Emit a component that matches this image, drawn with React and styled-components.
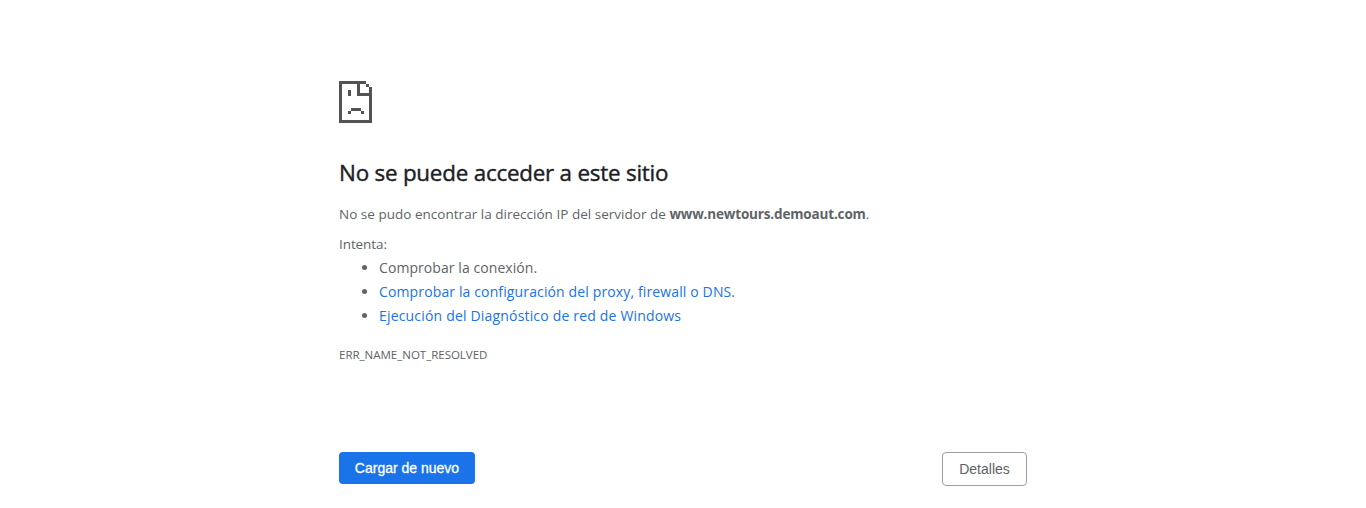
import React from 'react';
import styled, { createGlobalStyle } from 'styled-components';

const GlobalStyle = createGlobalStyle`
  body {
    margin: 0;
    background: #fff;
    color: #5f6368;
    font-family: "Segoe UI", "Open Sans", "Noto Sans", sans-serif;
    font-size: 15px;
  }
`;

const Page = styled.main`
  box-sizing: border-box;
  width: 688px;
  height: 508px;
  margin: 0 auto;
  padding-top: 81px;
  overflow: hidden;
`;

const SadPage = styled.svg`
  display: block;
  width: 33px;
  height: 42px;
  fill: #535353;
`;

const Title = styled.h1`
  margin: 34px 0 0;
  color: #202124;
  font-size: 22.4px;
  font-weight: 500;
  line-height: 32px;
  letter-spacing: -0.22px;
  -webkit-text-stroke: 0.4px #202124;
  white-space: nowrap;
`;

const Text = styled.p`
  margin: ${({ $top }) => $top}px 0 0;
  font-size: 13.5px;
  line-height: 20px;
  letter-spacing: ${({ $tracking = 0 }) => $tracking}px;
  white-space: nowrap;
`;

const Host = styled.strong`
  font-weight: 700;
  letter-spacing: -0.16px;
`;

const Suggestions = styled.ul`
  margin: 2px 0 0;
  padding: 0 0 0 40px;
  font-size: 14px;
  line-height: 24px;
`;

const Suggestion = styled.li`
  white-space: nowrap;
  letter-spacing: ${({ $tracking = 0 }) => $tracking}px;
`;

const Link = styled.a`
  color: #1a73e8;
  text-decoration: none;
`;

const ErrorCode = styled.div`
  margin-top: 17px;
  font-size: 11.5px;
  line-height: 20px;
  letter-spacing: -0.01px;
`;

const Actions = styled.div`
  display: flex;
  align-items: flex-start;
  justify-content: space-between;
  margin-top: 87px;
`;

const Button = styled.button`
  box-sizing: border-box;
  width: ${({ $primary }) => ($primary ? 136 : 85)}px;
  height: ${({ $primary }) => ($primary ? 32 : 34)}px;
  padding: 0;
  border: ${({ $primary }) => ($primary ? '0' : '1px solid #9aa0a6')};
  border-radius: 4px;
  background: ${({ $primary }) => ($primary ? '#1a73e8' : '#fff')};
  color: ${({ $primary }) => ($primary ? '#fff' : '#5f6368')};
  font: 14px "Liberation Sans", Arial, sans-serif;
  -webkit-text-stroke: ${({ $primary }) => ($primary ? '0.3px #fff' : '0')};
  cursor: pointer;
`;

export default function App() {
  return (
    <>
      <GlobalStyle />
      <Page>
        <SadPage viewBox="0 0 33 42" shapeRendering="crispEdges" aria-hidden="true">
          <path d="M0 0h27v3H21v9h9V6h3v36H0zM3 3v36h27V15H18V3z" fillRule="evenodd" />
          <path d="M27 3h3v3h-3zM9 9h3v6H9zM12 27h10v3H12zM9 30h3v3H9zM22 30h3v3h-3z" />
        </SadPage>
        <Title>No se puede acceder a este sitio</Title>
        <Text $top={15} $tracking={0.02}>
          No se pudo encontrar la dirección IP del servidor de <Host>www.newtours.demoaut.com</Host>.
        </Text>
        <Text $top={10} $tracking={-0.08}>Intenta:</Text>
        <Suggestions>
          <Suggestion $tracking={0.07}>Comprobar la conexión.</Suggestion>
          <Suggestion $tracking={0.13}>
            <Link href="#">Comprobar la configuración del proxy, firewall o DNS</Link>.
          </Suggestion>
          <Suggestion $tracking={0.18}>
            <Link href="#">Ejecución del Diagnóstico de red de Windows</Link>
          </Suggestion>
        </Suggestions>
        <ErrorCode>ERR_NAME_NOT_RESOLVED</ErrorCode>
        <Actions>
          <Button $primary>Cargar de nuevo</Button>
          <Button>Detalles</Button>
        </Actions>
      </Page>
    </>
  );
}
